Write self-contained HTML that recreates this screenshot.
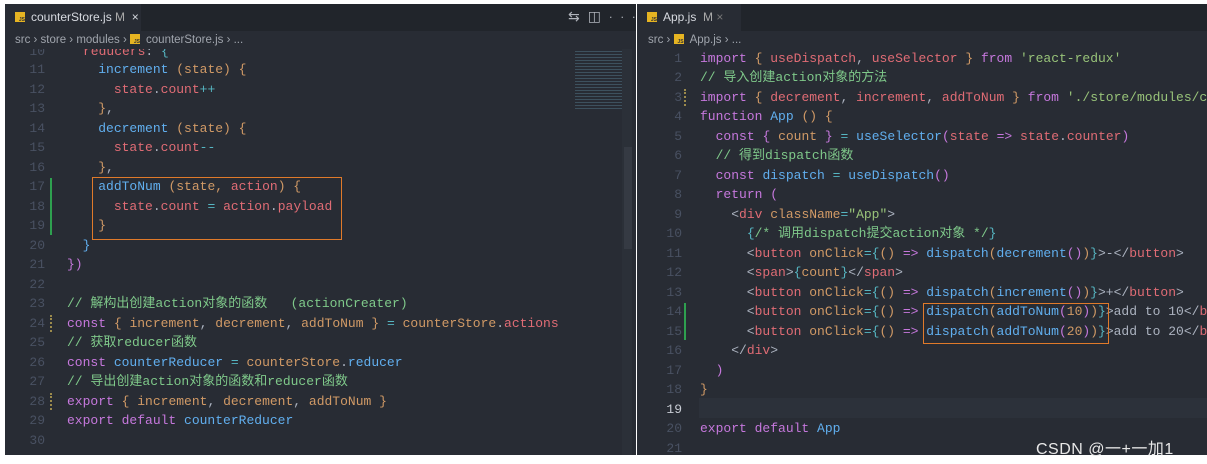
<!DOCTYPE html>
<html><head><meta charset="utf-8"><style>
*{margin:0;padding:0;box-sizing:border-box}
body{width:1207px;height:464px;background:#fff;position:relative;overflow:hidden;font-family:"Liberation Mono","Noto Sans CJK SC",monospace;}
.pane{position:absolute;top:4px;height:451px;background:#282c34;overflow:hidden}
.tabbar{position:absolute;left:0;top:0;right:0;height:27px;background:#21252b}
.tab{position:absolute;top:0;height:27px;background:#282c34;color:#d7dae0;font:12px "Liberation Sans",sans-serif;line-height:27px;padding-left:10px;white-space:nowrap}
.js{display:inline-block;width:10px;height:10px;background:#e6b422;vertical-align:-1px;margin-right:6px;position:relative}
.js:after{content:"JS";position:absolute;right:0;bottom:-1px;font:bold 5px "Liberation Sans";color:#333}
.crumb{position:absolute;top:27px;left:0;right:0;height:18px;color:#a0a5ad;font:11.5px "Liberation Sans",sans-serif;line-height:18px;white-space:nowrap;background:#282c34;z-index:2}
.l{position:absolute;height:19px;line-height:19px;font-size:13px;white-space:pre;color:#abb2bf}
.n{position:absolute;height:19px;line-height:19px;font-size:13px;color:#495162;text-align:right;width:30px}
.k{color:#c678dd}.b{color:#61afef}.r{color:#e06c75}.o{color:#d19a66}.c{color:#7fc98a}.cy{color:#56b6c2}.g{color:#98c379}.w{color:#abb2bf}
.box{position:absolute;border:1.5px solid #e07a2a}
.gb{position:absolute;width:2px;background:#2ea04f}
.yb{position:absolute;width:2px;border-left:2px dotted #9b8a4c}
</style></head><body>
<!-- LEFT -->
<div class="pane" style="left:5px;width:631px">
<div class="tabbar"></div>
<div class="tab" style="left:0;width:136px"><span class="js"></span>counterStore.js <span style="color:#aaa">M</span> &nbsp;×</div>
<div style="position:absolute;top:5px;left:563px;color:#b0b4bb;font:14px 'DejaVu Sans';letter-spacing:8px">⇆◫<span style="font-size:11px">···</span></div>
<div style="position:absolute;left:570px;top:45px;width:47px;height:60px;opacity:.6;background:repeating-linear-gradient(#282c34 0 2px,#4b6a7a 2px 3px)"></div>
<div style="position:absolute;left:617px;top:45px;width:10px;height:406px;background:#2b3038"></div>
<div style="position:absolute;left:619px;top:143px;width:8px;height:102px;background:#353a43"></div>
<div class="n" style="left:10px;top:38px">10</div><div class="l" style="left:78px;top:38px"><span class="r">reducers</span>: <span class="cy">{</span></div>
<div class="crumb" style="padding-left:10px">src › store › modules › <span class="js"></span>counterStore.js › ...</div>
</div>
<!-- RIGHT -->
<div class="pane" style="left:637px;width:570px">
<div class="tabbar"></div>
<div class="tab" style="left:0;width:104px"><span class="js"></span>App.js &nbsp;<span style="color:#aaa">M</span> <span style="color:#777">×</span></div>
<div class="crumb" style="padding-left:11px">src › <span class="js"></span>App.js › ...</div>
<div style="position:absolute;left:62px;top:394px;width:508px;height:20px;background:#2c313a"></div>
</div>
<!-- left lines -->
<div class="n" style="left:15px;top:60px">11</div><div class="l" style="left:67px;top:60px">    <span class="b">increment</span> <span class="o">(state) {</span></div>
<div class="n" style="left:15px;top:80px">12</div><div class="l" style="left:67px;top:80px">      <span class="r">state</span>.<span class="r">count</span><span class="cy">++</span></div>
<div class="n" style="left:15px;top:99px">13</div><div class="l" style="left:67px;top:99px">    <span class="o">}</span>,</div>
<div class="n" style="left:15px;top:119px">14</div><div class="l" style="left:67px;top:119px">    <span class="b">decrement</span> <span class="o">(state) {</span></div>
<div class="n" style="left:15px;top:138px">15</div><div class="l" style="left:67px;top:138px">      <span class="r">state</span>.<span class="r">count</span><span class="cy">--</span></div>
<div class="n" style="left:15px;top:158px">16</div><div class="l" style="left:67px;top:158px">    <span class="o">}</span>,</div>
<div class="n" style="left:15px;top:177px">17</div><div class="l" style="left:67px;top:177px">    <span class="b">addToNum</span> <span class="o">(state, <span class="r">action</span>) {</span></div>
<div class="n" style="left:15px;top:197px">18</div><div class="l" style="left:67px;top:197px">      <span class="r">state</span>.<span class="r">count</span> <span class="cy">=</span> <span class="r">action</span>.<span class="r">payload</span></div>
<div class="n" style="left:15px;top:216px">19</div><div class="l" style="left:67px;top:216px">    <span class="o">}</span></div>
<div class="n" style="left:15px;top:236px">20</div><div class="l" style="left:67px;top:236px">  <span class="b">}</span></div>
<div class="n" style="left:15px;top:255px">21</div><div class="l" style="left:67px;top:255px"><span class="k">})</span></div>
<div class="n" style="left:15px;top:275px">22</div>
<div class="n" style="left:15px;top:294px">23</div><div class="l" style="left:67px;top:294px"><span class="c">// 解构出创建action对象的函数   (actionCreater)</span></div>
<div class="n" style="left:15px;top:314px">24</div><div class="l" style="left:67px;top:314px"><span class="k">const</span> <span class="o">{</span> <span class="o">increment</span>, <span class="o">decrement</span>, <span class="o">addToNum</span> <span class="o">}</span> <span class="cy">=</span> <span class="o">counterStore</span>.<span class="r">actions</span></div>
<div class="n" style="left:15px;top:333px">25</div><div class="l" style="left:67px;top:333px"><span class="c">// 获取reducer函数</span></div>
<div class="n" style="left:15px;top:353px">26</div><div class="l" style="left:67px;top:353px"><span class="k">const</span> <span class="b">counterReducer</span> <span class="cy">=</span> <span class="o">counterStore</span>.<span class="b">reducer</span></div>
<div class="n" style="left:15px;top:372px">27</div><div class="l" style="left:67px;top:372px"><span class="c">// 导出创建action对象的函数和reducer函数</span></div>
<div class="n" style="left:15px;top:392px">28</div><div class="l" style="left:67px;top:392px"><span class="k">export</span> <span class="o">{</span> <span class="o">increment</span>, <span class="o">decrement</span>, <span class="o">addToNum</span> <span class="o">}</span></div>
<div class="n" style="left:15px;top:411px">29</div><div class="l" style="left:67px;top:411px"><span class="k">export default</span> <span class="b">counterReducer</span></div>
<div class="n" style="left:15px;top:431px">30</div>
<div class="gb" style="left:50px;top:178px;height:57px"></div>
<div class="yb" style="left:50px;top:315px;height:17px"></div>
<div class="yb" style="left:50px;top:393px;height:17px"></div>
<div class="box" style="left:92px;top:177px;width:250px;height:63px"></div>
<!-- right lines -->
<div class="n" style="left:652px;top:49px">1</div><div class="l" style="left:700px;top:49px"><span class="k">import</span> <span class="o">{</span> <span class="r">useDispatch</span>, <span class="r">useSelector</span> <span class="o">}</span> <span class="k">from</span> <span class="g">'react-redux'</span></div>
<div class="n" style="left:652px;top:68px">2</div><div class="l" style="left:700px;top:68px"><span class="c">// 导入创建action对象的方法</span></div>
<div class="n" style="left:652px;top:88px">3</div><div class="l" style="left:700px;top:88px"><span class="k">import</span> <span class="o">{</span> <span class="r">decrement</span>, <span class="r">increment</span>, <span class="r">addToNum</span> <span class="o">}</span> <span class="k">from</span> <span class="g">'./store/modules/c</span></div>
<div class="n" style="left:652px;top:107px">4</div><div class="l" style="left:700px;top:107px"><span class="k">function</span> <span class="b">App</span> <span class="o">() {</span></div>
<div class="n" style="left:652px;top:127px">5</div><div class="l" style="left:700px;top:127px">  <span class="k">const</span> <span class="k">{</span> <span class="o">count</span> <span class="k">}</span> <span class="cy">=</span> <span class="b">useSelector</span><span class="k">(</span><span class="r">state</span> <span class="k">=&gt;</span> <span class="r">state</span>.<span class="r">counter</span><span class="k">)</span></div>
<div class="n" style="left:652px;top:146px">6</div><div class="l" style="left:700px;top:146px">  <span class="c">// 得到dispatch函数</span></div>
<div class="n" style="left:652px;top:166px">7</div><div class="l" style="left:700px;top:166px">  <span class="k">const</span> <span class="b">dispatch</span> <span class="cy">=</span> <span class="b">useDispatch</span><span class="k">()</span></div>
<div class="n" style="left:652px;top:185px">8</div><div class="l" style="left:700px;top:185px">  <span class="k">return</span> <span class="k">(</span></div>
<div class="n" style="left:652px;top:205px">9</div><div class="l" style="left:700px;top:205px">    &lt;<span class="r">div</span> <span class="o">className</span><span class="cy">=</span><span class="g">"App"</span>&gt;</div>
<div class="n" style="left:652px;top:224px">10</div><div class="l" style="left:700px;top:224px">      <span class="cy">{</span><span class="c">/* 调用dispatch提交action对象 */</span><span class="cy">}</span></div>
<div class="n" style="left:652px;top:244px">11</div><div class="l" style="left:700px;top:244px">      &lt;<span class="r">button</span> <span class="o">onClick</span><span class="cy">={</span><span class="o">()</span> <span class="k">=&gt;</span> <span class="b">dispatch</span><span class="o">(</span><span class="b">decrement</span><span class="k">()</span><span class="o">)</span><span class="cy">}</span>&gt;-&lt;/<span class="r">button</span>&gt;</div>
<div class="n" style="left:652px;top:263px">12</div><div class="l" style="left:700px;top:263px">      &lt;<span class="r">span</span>&gt;<span class="cy">{</span><span class="o">count</span><span class="cy">}</span>&lt;/<span class="r">span</span>&gt;</div>
<div class="n" style="left:652px;top:283px">13</div><div class="l" style="left:700px;top:283px">      &lt;<span class="r">button</span> <span class="o">onClick</span><span class="cy">={</span><span class="o">()</span> <span class="k">=&gt;</span> <span class="b">dispatch</span><span class="o">(</span><span class="b">increment</span><span class="k">()</span><span class="o">)</span><span class="cy">}</span>&gt;+&lt;/<span class="r">button</span>&gt;</div>
<div class="n" style="left:652px;top:302px">14</div><div class="l" style="left:700px;top:302px">      &lt;<span class="r">button</span> <span class="o">onClick</span><span class="cy">={</span><span class="o">()</span> <span class="k">=&gt;</span> <span class="b">dispatch</span><span class="o">(</span><span class="b">addToNum</span><span class="k">(</span><span class="o">10</span><span class="k">)</span><span class="o">)</span><span class="cy">}</span>&gt;add to 10&lt;/<span class="r">b</span></div>
<div class="n" style="left:652px;top:322px">15</div><div class="l" style="left:700px;top:322px">      &lt;<span class="r">button</span> <span class="o">onClick</span><span class="cy">={</span><span class="o">()</span> <span class="k">=&gt;</span> <span class="b">dispatch</span><span class="o">(</span><span class="b">addToNum</span><span class="k">(</span><span class="o">20</span><span class="k">)</span><span class="o">)</span><span class="cy">}</span>&gt;add to 20&lt;/<span class="r">b</span></div>
<div class="n" style="left:652px;top:341px">16</div><div class="l" style="left:700px;top:341px">    &lt;/<span class="r">div</span>&gt;</div>
<div class="n" style="left:652px;top:361px">17</div><div class="l" style="left:700px;top:361px">  <span class="k">)</span></div>
<div class="n" style="left:652px;top:380px">18</div><div class="l" style="left:700px;top:380px"><span class="o">}</span></div>
<div class="n" style="left:652px;top:400px;color:#c8ccd4">19</div>
<div class="n" style="left:652px;top:419px">20</div><div class="l" style="left:700px;top:419px"><span class="k">export default</span> <span class="b">App</span></div>
<div class="n" style="left:652px;top:439px">21</div>
<div class="gb" style="left:684px;top:303px;height:37px"></div>
<div class="yb" style="left:684px;top:89px;height:17px"></div>
<div class="box" style="left:923px;top:303px;width:186px;height:41px"></div>
<div style="position:absolute;left:1036px;top:435px;color:#e8e8e8;font:16px 'Liberation Sans','Noto Sans CJK SC',sans-serif;letter-spacing:0.5px">CSDN @一+一加1</div>
</body></html>
